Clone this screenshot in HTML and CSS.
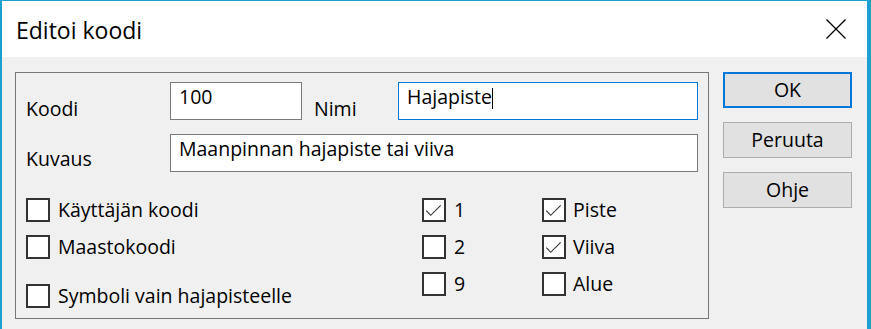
FILE: index.html
```html
<!DOCTYPE html>
<html lang="fi">
<head>
<meta charset="utf-8">
<title>Editoi koodi</title>
<link rel="stylesheet" href="styles.css">
</head>
<body>
<div class="window">
  <div class="titlebar">
    <span class="title">Editoi koodi</span>
    <svg class="close" width="20" height="20" viewBox="0 0 20 20"><path d="M0.5 0.5 L19.5 19.5 M19.5 0.5 L0.5 19.5" stroke="#000" stroke-width="1.3" fill="none"/></svg>
  </div>
  <div class="content">
    <div class="group">
      <div class="row row1">
        <span class="label lbl-koodi">Koodi</span>
        <div class="input input-koodi">100</div>
        <span class="label lbl-nimi">Nimi</span>
        <div class="input input-nimi focused">Hajapiste<span class="caret"></span></div>
      </div>
      <div class="row row2">
        <span class="label lbl-kuvaus">Kuvaus</span>
        <div class="input input-kuvaus">Maanpinnan hajapiste tai viiva</div>
      </div>
      <div class="checks">
        <div class="col col-a">
          <div class="check"><span class="box"></span><span class="ctext">Käyttäjän koodi</span></div>
          <div class="check"><span class="box"></span><span class="ctext">Maastokoodi</span></div>
          <div class="check check-last"><span class="box"></span><span class="ctext">Symboli vain hajapisteelle</span></div>
        </div>
        <div class="col col-b">
          <div class="check"><span class="box checked"><svg viewBox="0 0 20 20" width="20" height="20"><path d="M2.3 10.7 L6.7 15.3 L16.7 5.3" stroke="#333" stroke-width="1.1" fill="none"/></svg></span><span class="ctext">1</span></div>
          <div class="check"><span class="box"></span><span class="ctext">2</span></div>
          <div class="check"><span class="box"></span><span class="ctext">9</span></div>
        </div>
        <div class="col col-c">
          <div class="check"><span class="box checked"><svg viewBox="0 0 20 20" width="20" height="20"><path d="M2.3 10.7 L6.7 15.3 L16.7 5.3" stroke="#333" stroke-width="1.1" fill="none"/></svg></span><span class="ctext">Piste</span></div>
          <div class="check"><span class="box checked"><svg viewBox="0 0 20 20" width="20" height="20"><path d="M2.3 10.7 L6.7 15.3 L16.7 5.3" stroke="#333" stroke-width="1.1" fill="none"/></svg></span><span class="ctext">Viiva</span></div>
          <div class="check"><span class="box"></span><span class="ctext">Alue</span></div>
        </div>
      </div>
    </div>
    <div class="buttons">
      <div class="btn default">OK</div>
      <div class="btn">Peruuta</div>
      <div class="btn">Ohje</div>
    </div>
  </div>
</div>
</body>
</html>
```
FILE: styles.css
```css
* { box-sizing: border-box; }
html, body { margin: 0; padding: 0; }
body {
  width: 871px;
  height: 329px;
  overflow: hidden;
  background: #f0f0f0;
  font-family: "Open Sans", "Noto Sans", sans-serif;
  color: #000;
}
.window {
  width: 871px;
  height: 329px;
  border-top: 1px solid #1ba1d0;
  border-left: 2px solid #1ba1d0;
  border-right: 4px solid #1ba1d0;
  background: #f0f0f0;
}
.titlebar {
  height: 56px;
  background: #fff;
  display: flex;
  align-items: center;
  justify-content: space-between;
  padding-left: 14px;
  padding-right: 21px;
}
.title {
  font-size: 23px;
  line-height: 28px;
  margin-top: 2px;
}
.close { display: block; }
.content {
  display: flex;
  padding-top: 15px;
  padding-left: 13px;
}
.group {
  width: 694px;
  height: 247px;
  border: 1px solid #777;
  padding: 9px 0 0 10px;
}
.row { display: flex; align-items: flex-start; }
.row2 { margin-top: 13px; }
.label {
  font-size: 19.5px;
  line-height: 24px;
}
.lbl-koodi { width: 144px; margin-top: 15px; }
.lbl-nimi { width: 84px; margin-left: 12px; margin-top: 15px; }
.lbl-kuvaus { width: 144px; margin-top: 13px; }
.input {
  height: 38px;
  background: #fff;
  border: 1px solid #7a7a7a;
  font-size: 19.5px;
  line-height: 24px;
  padding: 2px 0 0 8px;
  white-space: nowrap;
}
.input-koodi { width: 132px; }
.input-nimi { width: 300px; }
.input-kuvaus { width: 528px; }
.focused { border-color: #0078d7; }
.caret {
  display: inline-block;
  width: 1px;
  height: 21px;
  background: #000;
  vertical-align: -5px;
}
.checks {
  display: flex;
  margin-top: 26px;
}
.col { display: flex; flex-direction: column; gap: 13px; }
.col-a { width: 396px; }
.col-b { width: 120px; }
.check {
  display: flex;
  align-items: center;
  height: 24px;
}
.check-last { margin-top: 12px; }
.box {
  width: 24px;
  height: 24px;
  border: 2px solid #333;
  background: #fff;
  margin-right: 8px;
  flex: none;
}
.box svg { display: block; }
.col-c .box { margin-right: 7px; }
.ctext { font-size: 19.5px; line-height: 24px; white-space: nowrap; }
.buttons {
  display: flex;
  flex-direction: column;
  gap: 14px;
  margin-left: 14px;
}
.btn {
  width: 129px;
  height: 36px;
  background: #e1e1e1;
  border: 1px solid #adadad;
  display: flex;
  align-items: center;
  justify-content: center;
  font-size: 19.5px;
  line-height: 24px;
  padding-bottom: 1px;
}
.btn.default { border: 2px solid #0078d7; }
```
